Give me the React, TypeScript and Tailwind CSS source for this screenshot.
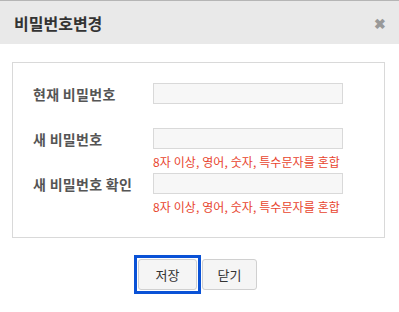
import React from "react";

const font = { fontFamily: '"Noto Sans CJK KR", "Noto Sans", sans-serif' };

function Row({ label, hint }: { label: string; hint?: boolean }) {
  return (
    <div className="flex flex-col">
      <div className="flex items-center h-[21px]">
        <div className="w-[120px] text-[14px] font-bold text-[#555] leading-none tracking-[0.3px]">{label}</div>
        <div className="w-[190px] h-[21px] bg-[#f7f7f7] border border-[#d9d9d9]" />
      </div>
      <div className="h-[24px] pl-[120px] flex items-center">
        {hint && (
          <span className="text-[12px] text-[#e8452e] leading-none mt-[1px] tracking-[0.1px]">
            8자 이상, 영어, 숫자, 특수문자를 혼합
          </span>
        )}
      </div>
    </div>
  );
}

export default function App() {
  return (
    <div className="w-[399px] h-[312px] bg-white border-t border-[#b5b5b5]" style={font}>
      <div className="h-[43px] bg-[#e9e9e9] flex items-center justify-between pl-[14px] pr-[13px]">
        <span className="text-[16px] font-bold text-[#333]">비밀번호변경</span>
        <span className="text-[14px] font-bold text-[#999] leading-none">✖</span>
      </div>
      <div className="pt-[18px] px-[12px]">
        <div className="w-[373px] h-[176px] border border-[#d9d9d9] pt-[20px] pl-[20px]">
          <Row label="현재 비밀번호" />
          <Row label="새 비밀번호" hint />
          <Row label="새 비밀번호 확인" hint />
        </div>
        <div className="flex justify-center gap-[5px] pt-[21px] pr-[4px]">
          <div className="-m-[4px] p-[1px] border-[3px] border-[#0a52d6]">
            <button className="block w-[59px] h-[31px] bg-[#f5f5f5] border border-[#d0d0d0] rounded-[3px] text-[13px] text-[#333]">
              저장
            </button>
          </div>
          <button className="w-[55px] h-[31px] bg-[#f5f5f5] border border-[#d0d0d0] rounded-[3px] text-[13px] text-[#333]">
            닫기
          </button>
        </div>
      </div>
    </div>
  );
}
